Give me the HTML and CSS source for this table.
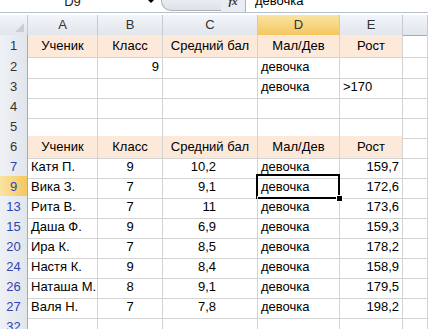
FILE: index.html
```html
<!DOCTYPE html>
<html lang="ru">
<head>
<meta charset="utf-8">
<link rel="stylesheet" href="styles.css">
</head>
<body>
<div class="fbar">
  <div class="namebox">D9</div>
  <div class="nb-arrow"></div>
  <div class="pill"></div>
  <div class="fx">fx</div>
  <div class="finput">девочка</div>
</div>
<div class="sheet">
  <div class="row hdr">
    <div class="corner"><span class="tri"></span></div>
    <div class="ch">A</div><div class="ch">B</div><div class="ch">C</div><div class="ch sel">D</div><div class="ch">E</div><div class="ch last"></div>
  </div>
  <div class="row r1">
    <div class="rh">1</div>
    <div class="c peach center">Ученик</div><div class="c peach center">Класс</div><div class="c peach center">Средний бал</div><div class="c peach center">Мал/Дев</div><div class="c peach center">Рост</div><div class="c"></div>
  </div>
  <div class="row">
    <div class="rh">2</div>
    <div class="c"></div><div class="c right">9</div><div class="c"></div><div class="c">девочка</div><div class="c"></div><div class="c"></div>
  </div>
  <div class="row">
    <div class="rh">3</div>
    <div class="c"></div><div class="c"></div><div class="c"></div><div class="c">девочка</div><div class="c">&gt;170</div><div class="c"></div>
  </div>
  <div class="row">
    <div class="rh">4</div>
    <div class="c"></div><div class="c"></div><div class="c"></div><div class="c"></div><div class="c"></div><div class="c"></div>
  </div>
  <div class="row">
    <div class="rh">5</div>
    <div class="c"></div><div class="c"></div><div class="c"></div><div class="c"></div><div class="c"></div><div class="c"></div>
  </div>
  <div class="row">
    <div class="rh">6</div>
    <div class="c peach center">Ученик</div><div class="c peach center">Класс</div><div class="c peach center">Средний бал</div><div class="c peach center">Мал/Дев</div><div class="c peach center">Рост</div><div class="c"></div>
  </div>
  <div class="row">
    <div class="rh blue">7</div>
    <div class="c">Катя П.</div><div class="c center">9</div><div class="c rc">10,2</div><div class="c">девочка</div><div class="c right">159,7</div><div class="c"></div>
  </div>
  <div class="row">
    <div class="rh blue sel">9</div>
    <div class="c">Вика З.</div><div class="c center">7</div><div class="c rc">9,1</div><div class="c active">девочка<span class="handle"></span></div><div class="c right">172,6</div><div class="c"></div>
  </div>
  <div class="row">
    <div class="rh blue">13</div>
    <div class="c">Рита В.</div><div class="c center">7</div><div class="c rc">11</div><div class="c">девочка</div><div class="c right">173,6</div><div class="c"></div>
  </div>
  <div class="row">
    <div class="rh blue">15</div>
    <div class="c">Даша Ф.</div><div class="c center">9</div><div class="c rc">6,9</div><div class="c">девочка</div><div class="c right">159,3</div><div class="c"></div>
  </div>
  <div class="row">
    <div class="rh blue">20</div>
    <div class="c">Ира К.</div><div class="c center">7</div><div class="c rc">8,5</div><div class="c">девочка</div><div class="c right">178,2</div><div class="c"></div>
  </div>
  <div class="row">
    <div class="rh blue">24</div>
    <div class="c">Настя К.</div><div class="c center">9</div><div class="c rc">8,4</div><div class="c">девочка</div><div class="c right">158,9</div><div class="c"></div>
  </div>
  <div class="row">
    <div class="rh blue">26</div>
    <div class="c">Наташа М.</div><div class="c center">8</div><div class="c rc">9,1</div><div class="c">девочка</div><div class="c right">179,5</div><div class="c"></div>
  </div>
  <div class="row">
    <div class="rh blue">27</div>
    <div class="c">Валя Н.</div><div class="c center">7</div><div class="c rc">7,8</div><div class="c">девочка</div><div class="c right">198,2</div><div class="c"></div>
  </div>
  <div class="row">
    <div class="rh blue">32</div>
    <div class="c"></div><div class="c"></div><div class="c"></div><div class="c"></div><div class="c"></div><div class="c"></div>
  </div>
</div>
</body>
</html>
```

FILE: styles.css
```css
html, body {
  margin: 0;
  padding: 0;
  background: #ffffff;
  overflow: hidden;
}
body {
  font-family: "Liberation Sans", Arial, sans-serif;
  font-size: 13px;
  color: #000;
}
.fbar {
  display: flex;
  align-items: center;
  height: 22px;
  margin-top: -10px;
  border-bottom: 1px solid #b9c1cc;
  margin-bottom: 2px;
  background: #ffffff;
}
.namebox {
  width: 145px;
  text-align: center;
  box-sizing: border-box;
  color: #222;
}
.nb-arrow {
  width: 0;
  height: 0;
  border-left: 4px solid transparent;
  border-right: 4px solid transparent;
  border-top: 4px solid #000;
  margin-left: 2px;
  margin-right: 6px;
}
.pill {
  width: 60px;
  height: 20px;
  border: 1px solid #a9b3bf;
  border-right: none;
  border-radius: 12px 0 0 12px;
  background: linear-gradient(#f4f6f9, #dde2e8);
  box-sizing: border-box;
}
.fx {
  width: 25px;
  height: 22px;
  line-height: 22px;
  text-align: center;
  font-family: "Liberation Serif", serif;
  font-style: italic;
  font-weight: bold;
  font-size: 11px;
  color: #333;
  background: #e9edf2;
  border-right: 1px solid #a9b3bf;
  box-sizing: border-box;
}
.finput {
  flex: 1;
  padding-left: 9px;
  height: 22px;
  line-height: 22px;
}
.sheet {
  display: flex;
  flex-direction: column;
}
.row {
  display: grid;
  grid-template-columns: 28px 70px 65px 95px 82px 63px 1fr;
  height: 20px;
}
.row.r1 {
  height: 21px;
}
.row > div {
  box-sizing: border-box;
  border-right: 1px solid #d4d4d4;
  border-bottom: 1px solid #d4d4d4;
  line-height: 22px;
  padding: 0 3px;
  white-space: nowrap;
  overflow: visible;
  position: relative;
}
.hdr > div {
  background: linear-gradient(#f2f5f9, #e1e6ec);
  border-right: 1px solid #c2cad4;
  border-bottom: 1px solid #9eabba;
  text-align: center;
  color: #333;
  line-height: 20px;
}
.hdr .ch.sel {
  background: linear-gradient(#fbe3a3, #f4c760);
  border-bottom-color: #c29b3c;
}
.corner {
  position: relative;
}
.tri {
  position: absolute;
  right: 3px;
  bottom: 3px;
  width: 0;
  height: 0;
  border-left: 9px solid transparent;
  border-bottom: 9px solid #c9ced5;
}
.row > .rh {
  background: linear-gradient(90deg, #eef1f5, #e1e6ec);
  border-right: 1px solid #9eabba;
  border-bottom: 1px solid #c2cad4;
  text-align: center;
  color: #333;
  padding: 0;
}
.row > .rh.blue {
  color: #2a46b5;
}
.row > .rh.sel {
  background: linear-gradient(90deg, #fbe3a3, #f4c760);
}
.peach {
  background: #fde9d9;
}
.row > .center {
  text-align: center;
}
.row > .right {
  text-align: right;
}
.row > .rc {
  text-align: right;
  padding-right: 41px;
}
.active::after {
  content: "";
  position: absolute;
  left: -2px;
  top: -2px;
  right: -1px;
  bottom: -1px;
  border: 2px solid #000;
  pointer-events: none;
}
.handle {
  position: absolute;
  right: -4px;
  bottom: -4px;
  width: 5px;
  height: 5px;
  background: #000;
  border: 1px solid #fff;
  z-index: 2;
}
```
